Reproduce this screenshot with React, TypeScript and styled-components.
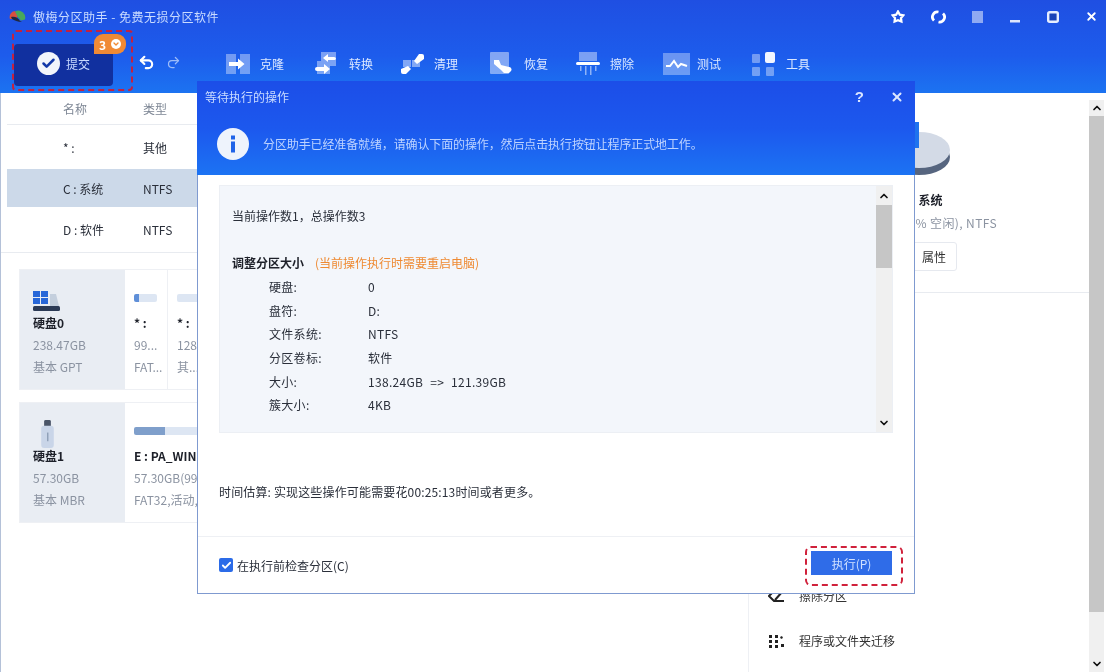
import styled, { createGlobalStyle } from "styled-components";
import { Check, ChevronDown, ChevronUp, Redo2, Undo2, X } from "lucide-react";

const GlobalStyle = createGlobalStyle`
  html, body {
    margin: 0;
    padding: 0;
    background: #fff;
  }
  * {
    box-sizing: border-box;
  }
`;

const tools = [
  { label: "克隆", pitch: 89, icon: <CloneIcon /> },
  { label: "转换", pitch: 85, icon: <ConvertIcon /> },
  { label: "清理", pitch: 90, icon: <CleanIcon /> },
  { label: "恢复", pitch: 86, icon: <RecoverIcon /> },
  { label: "擦除", pitch: 87, icon: <WipeIcon /> },
  { label: "测试", pitch: 89, icon: <TestIcon /> },
  { label: "工具", pitch: 70, icon: <ToolsIcon /> },
];

const partitions = [
  { name: "* :", type: "其他", selected: false },
  { name: "C : 系统", type: "NTFS", selected: true },
  { name: "D : 软件", type: "NTFS", selected: false },
];

const details = [
  ["硬盘:", "0"],
  ["盘符:", "D:"],
  ["文件系统:", "NTFS"],
  ["分区卷标:", "软件"],
  ["大小:", "138.24GB => 121.39GB"],
  ["簇大小:", "4KB"],
];

function CloneIcon() {
  return (
    <svg width="24" height="20" viewBox="0 0 24 20">
      <rect x="0" y="0" width="10" height="20" fill="#fff" opacity=".38" />
      <rect x="14" y="0" width="10" height="20" fill="#fff" opacity=".38" />
      <path d="M3 8h9V4.500l6.500 5.500-6.500 5.500V12H3z" fill="#fff" />
    </svg>
  );
}

function ConvertIcon() {
  return (
    <svg width="23" height="24" viewBox="0 0 23 24">
      <path d="M6 0h15v14h-6v8H2V9h4z" fill="#fff" opacity=".42" />
      <path d="M21 7a2 2 0 0 0-2-2h-6V2L8 6l5 4V8h6a2 2 0 0 0 2-1z" fill="#fff" />
      <path d="M0 17a2 2 0 0 1 2-2h7v-3l6 5-6 5v-3H2a2 2 0 0 1-2-2z" fill="#fff" />
    </svg>
  );
}

function CleanIcon() {
  return (
    <svg width="25" height="22" viewBox="0 0 25 22">
      <path d="M3 7h8v7H3zM12 7h8v7h-8z" fill="#fff" opacity=".45" />
      <path d="M1 16l7-3 3 3-5 5H3a2 2 0 0 1-2-2z" fill="#fff" />
      <path d="M14 8l5-7h3a2 2 0 0 1 2 2v3l-7 5z" fill="#fff" />
    </svg>
  );
}

function RecoverIcon() {
  return (
    <svg width="23" height="24" viewBox="0 0 23 24">
      <rect x="0" y="0" width="19" height="22" rx="1" fill="#fff" opacity=".45" />
      <path d="M4 8h5l2 5 8 2a2.500 2.500 0 0 1 2 4l-2 2h-5l-3-3-7-6z" fill="#fff" />
    </svg>
  );
}

function WipeIcon() {
  return (
    <svg width="24" height="24" viewBox="0 0 24 24">
      <rect x="3" y="0" width="18" height="9" fill="#fff" opacity=".42" />
      <rect x="0" y="10" width="24" height="3" rx="1.500" fill="#fff" />
      <path d="M4 14h1.500v5H4zM9 14h1.500v9H9zM14 14h1.500v9H14zM19 14h1.500v5H19z" fill="#fff" opacity=".5" />
    </svg>
  );
}

function TestIcon() {
  return (
    <svg width="27" height="24" viewBox="0 0 27 24">
      <rect width="27" height="22" y="1" fill="#fff" opacity=".35" />
      <path d="M3 14h4l4-5 4 6 3-3 6 2" fill="none" stroke="#fff" strokeWidth="2" />
    </svg>
  );
}

function ToolsIcon() {
  return (
    <svg width="23" height="24" viewBox="0 0 23 24">
      <rect x="0" y="2" width="8" height="9" rx="1" fill="#fff" opacity=".38" />
      <rect x="13" y="0" width="10" height="11" rx="2" fill="#f2f6ff" />
      <rect x="0" y="15" width="8" height="9" rx="1" fill="#fff" opacity=".38" />
      <rect x="14" y="15" width="8" height="9" rx="1" fill="#fff" opacity=".38" />
    </svg>
  );
}

function AppLogo() {
  return (
    <svg width="17" height="15" viewBox="0 0 17 15">
      <path d="M1 10a6 6 0 0 1 5-8l3 5-2 3z" fill="#d8503f" />
      <path d="M6 2.500a7 7 0 0 1 10 8l-4 1-3-3z" fill="#49a85a" />
      <path d="M2 8c3-1 7 0 9 4l2 1c-4 0-8-2-10-3z" fill="#20283f" />
    </svg>
  );
}

function WindowIcons() {
  return (
    <WindowControls>
      <svg width="14" height="14" viewBox="0 0 14 14">
        <path d="M7 1.500l1.800 3.200 3.500.6-2.300 2.700.4 3.500L7 10.200 3.600 11.500 4 8 1.700 5.300l3.500-.6z" fill="none" stroke="#fff" strokeWidth="2.300" />
      </svg>
      <svg width="15" height="14" viewBox="0 0 14 14">
        <path d="M2.500 10.500A5 5 0 0 1 7 2M11.500 3.500A5 5 0 0 1 7 12" fill="none" stroke="#fff" strokeWidth="2.800" />
      </svg>
      <svg width="11" height="14" viewBox="0 0 11 14">
        <rect y="1" width="11" height="12" fill="#fff" opacity=".5" />
      </svg>
      <svg width="12" height="14" viewBox="0 0 12 14">
        <rect x="1" y="10" width="10" height="2.500" fill="#fff" opacity=".85" />
      </svg>
      <svg width="12" height="14" viewBox="0 0 12 14">
        <rect x="1.200" y="2.200" width="9.600" height="9.600" rx="1.500" fill="#1a44b8" stroke="#e6eeff" strokeWidth="2.400" />
      </svg>
      <X size={13} color="#fff" strokeWidth={3.4} />
    </WindowControls>
  );
}

export default function App() {
  return (
    <>
      <GlobalStyle />
      <Page>
        <Header>
          <TitleBar>
            <AppLogo />
            <AppTitle>傲梅分区助手 - 免费无损分区软件</AppTitle>
            <WindowIcons />
          </TitleBar>
          <ToolRow>
            <SubmitRing>
              <SubmitButton>
                <SubmitCheck>
                  <Check size={15} color="#1238a8" strokeWidth={4} />
                </SubmitCheck>
                提交
              </SubmitButton>
              <Badge>
                3
                <BadgeArrow>
                  <ChevronDown size={8} color="#f08a35" strokeWidth={4} />
                </BadgeArrow>
              </Badge>
            </SubmitRing>
            <HistoryGroup>
              <Undo2 size={17} color="#fff" strokeWidth={3} />
              <Redo2 size={15} color="#9dbcf8" strokeWidth={2} />
            </HistoryGroup>
            <Tools>
              {tools.map((tool) => (
                <ToolItem key={tool.label} $pitch={tool.pitch}>
                  <ToolGlyph>{tool.icon}</ToolGlyph>
                  {tool.label}
                </ToolItem>
              ))}
            </Tools>
          </ToolRow>
        </Header>

        <Main>
          <LeftPane>
            <TableHead>
              <NameCell>名称</NameCell>
              <span>类型</span>
            </TableHead>
            <TableBody>
              {partitions.map((row) => (
                <TableRow key={row.name} $selected={row.selected}>
                  <NameCell>{row.name}</NameCell>
                  <span>{row.type}</span>
                </TableRow>
              ))}
            </TableBody>
            <DiskList>
              <DiskCard>
                <DiskSide>
                  <DiskGlyph>
                    <svg width="28" height="22" viewBox="0 0 28 22">
                      <path d="M0 1h7v6H0zM8 1h7v6H8zM0 8h7v6H0zM8 8h7v6H8z" fill="#2767d8" />
                      <path d="M17 4h6l3 12H17z" fill="#c4cfdd" />
                      <rect x="0" y="16" width="27" height="5" rx="1.500" fill="#2b3a55" />
                    </svg>
                  </DiskGlyph>
                  <DiskName>硬盘0</DiskName>
                  <DiskMeta>238.47GB</DiskMeta>
                  <DiskMeta>基本 GPT</DiskMeta>
                </DiskSide>
                <PartCell $width={43}>
                  <UsageBar $width={23} $used={5} />
                  <PartName>* :</PartName>
                  <DiskMeta>99...</DiskMeta>
                  <DiskMeta>FAT...</DiskMeta>
                </PartCell>
                <PartCell $width={60}>
                  <UsageBar $width={40} $used={0} />
                  <PartName>* :</PartName>
                  <DiskMeta>128...</DiskMeta>
                  <DiskMeta>其...</DiskMeta>
                </PartCell>
              </DiskCard>
              <DiskCard>
                <DiskSide>
                  <DiskGlyph $indent={8}>
                    <svg width="13" height="28" viewBox="0 0 13 29">
                      <rect x="3" y="0" width="7" height="7" rx="1.500" fill="#4a5568" />
                      <rect x="0" y="6" width="13" height="23" rx="3" fill="#c9d5e8" />
                      <rect x="6" y="13" width="1.500" height="9" fill="#8fa0b8" />
                    </svg>
                  </DiskGlyph>
                  <DiskName>硬盘1</DiskName>
                  <DiskMeta>57.30GB</DiskMeta>
                  <DiskMeta>基本 MBR</DiskMeta>
                </DiskSide>
                <PartCell $width={200}>
                  <UsageBar $width={150} $used={31} $tone="#7f9fcb" />
                  <PartName>E : PA_WINPE</PartName>
                  <DiskMeta>57.30GB(99% 空闲)</DiskMeta>
                  <DiskMeta>FAT32,活动,主分区</DiskMeta>
                </PartCell>
              </DiskCard>
            </DiskList>
          </LeftPane>

          <RightPane>
            <Summary>
              <PieWrap>
                <svg width="72" height="62" viewBox="0 0 72 62">
                  <ellipse cx="36" cy="35" rx="31" ry="18" fill="#56657f" />
                  <ellipse cx="36" cy="28" rx="31" ry="18" fill="#d3dae6" />
                  <path d="M30 0h6v26h-6z" fill="#1f73ee" />
                </svg>
              </PieWrap>
              <SummaryName>C : 系统</SummaryName>
              <SummaryMeta>118.05GB(40% 空闲), NTFS</SummaryMeta>
              <SummaryActions>
                <PlainButton>操作</PlainButton>
                <PlainButton>属性</PlainButton>
              </SummaryActions>
            </Summary>
            <ActionList>
              <ActionRow>
                <ActionGlyph>
                  <svg width="18" height="14" viewBox="0 0 18 14">
                    <path d="M16 1L7 1 1 7l5 5h10M14 3l-7 8" fill="none" stroke="#222" strokeWidth="2" />
                  </svg>
                </ActionGlyph>
                擦除分区
              </ActionRow>
              <ActionRow>
                <ActionGlyph>
                  <svg width="16" height="14" viewBox="0 0 16 14">
                    <path d="M1 1h3v3H1zM7 1h3v3H7zM1 6h3v3H1zM7 6h3v3H7zM1 11h3v3H1zM7 11h3v3H7zM13 10h3v3h-3zM13 2l2 1-1 2-2-1z" fill="#222" />
                  </svg>
                </ActionGlyph>
                程序或文件夹迁移
              </ActionRow>
            </ActionList>
          </RightPane>

          <ScrollColumn>
            <ScrollArrow>
              <ChevronUp size={12} color="#111" strokeWidth={3.4} />
            </ScrollArrow>
            <ScrollThumb $height={496} />
            <ScrollRest />
            <ScrollArrow>
              <ChevronDown size={12} color="#111" strokeWidth={3.4} />
            </ScrollArrow>
          </ScrollColumn>
        </Main>

        <Dialog>
          <DialogHead>
            <DialogTitleRow>
              <DialogTitle>等待执行的操作</DialogTitle>
              <DialogHelp>?</DialogHelp>
              <X size={14} color="#dbe6ff" strokeWidth={3.4} />
            </DialogTitleRow>
            <DialogNotice>
              <InfoDot>
                <svg width="32" height="32" viewBox="0 0 32 32">
                  <circle cx="16" cy="16" r="16" fill="#eef3fc" />
                  <rect x="14" y="13.500" width="4" height="11" fill="#1f63e8" />
                  <rect x="14" y="7.500" width="4" height="4" fill="#1f63e8" />
                </svg>
              </InfoDot>
              分区助手已经准备就绪，请确认下面的操作，然后点击执行按钮让程序正式地工作。
            </DialogNotice>
          </DialogHead>

          <DialogBody>
            <OperationBox>
              <OperationText>
                <OperationLine>当前操作数1，总操作数3</OperationLine>
                <OperationTitle>
                  <strong>调整分区大小</strong>
                  <RebootNote>(当前操作执行时需要重启电脑)</RebootNote>
                </OperationTitle>
                {details.map(([label, value]) => (
                  <DetailRow key={label}>
                    <span>{label}</span>
                    <span>{value}</span>
                  </DetailRow>
                ))}
              </OperationText>
              <BoxScroll>
                <ScrollArrow $height={19}>
                  <ChevronUp size={12} color="#111" strokeWidth={3.4} />
                </ScrollArrow>
                <ScrollThumb $height={63} />
                <ScrollRest />
                <ScrollArrow $height={18}>
                  <ChevronDown size={12} color="#111" strokeWidth={3.4} />
                </ScrollArrow>
              </BoxScroll>
            </OperationBox>
            <Estimate>时间估算: 实现这些操作可能需要花00:25:13时间或者更多。</Estimate>
          </DialogBody>

          <DialogFooter>
            <CheckLabel>
              <CheckBox>
                <Check size={11} color="#fff" strokeWidth={4} />
              </CheckBox>
              在执行前检查分区(C)
            </CheckLabel>
            <RunRing>
              <RunButton>执行(P)</RunButton>
            </RunRing>
          </DialogFooter>
        </Dialog>
      </Page>
    </>
  );
}

const Page = styled.div`
  position: relative;
  width: 1106px;
  height: 672px;
  display: flex;
  flex-direction: column;
  overflow: hidden;
  background: #fff;
  font-family: "Noto Sans CJK SC", "Liberation Sans", sans-serif;
  font-size: 12px;
  color: #2a2f3a;
  filter: blur(0.5px);
`;

const Header = styled.header`
  height: 93px;
  flex: none;
  background: linear-gradient(180deg, #1f4fe2 0%, #1d5cec 60%, #1c73f1 100%);
  color: #dce8ff;
`;

const TitleBar = styled.div`
  height: 30px;
  padding: 3px 8px 0 9px;
  display: flex;
  align-items: center;
  gap: 7px;
`;

const AppTitle = styled.span`
  font-size: 12px;
  letter-spacing: 0.5px;
  color: #c9dbff;
`;

const WindowControls = styled.div`
  margin-left: auto;
  width: 207px;
  display: flex;
  align-items: center;
  justify-content: space-between;
`;

const ToolRow = styled.div`
  height: 63px;
  padding-left: 12px;
  display: flex;
  align-items: flex-start;
`;

const SubmitRing = styled.div`
  position: relative;
  width: 121px;
  height: 61px;
  padding: 12px 0 0 0;
  border: 2.5px dashed #c5213f;
  border-radius: 4px;
`;

const SubmitButton = styled.button`
  width: 99px;
  height: 42px;
  padding: 0 0 4px;
  display: flex;
  align-items: center;
  justify-content: center;
  gap: 6px;
  border: 0;
  border-radius: 4px;
  background: #11309f;
  color: #c9dbff;
  font: inherit;
`;

const SubmitCheck = styled.span`
  width: 23px;
  height: 23px;
  border-radius: 50%;
  background: #f2f5fb;
  display: flex;
  align-items: center;
  justify-content: center;
`;

const Badge = styled.span`
  position: absolute;
  top: 2px;
  left: 80px;
  width: 32px;
  height: 20px;
  display: flex;
  align-items: center;
  justify-content: center;
  gap: 5px;
  border-radius: 9px 9px 9px 0;
  background: #f08a35;
  color: #fff;
  font-weight: 700;
`;

const BadgeArrow = styled.span`
  width: 10px;
  height: 10px;
  border-radius: 50%;
  background: #fff;
  display: flex;
  align-items: center;
  justify-content: center;
`;

const HistoryGroup = styled.div`
  width: 93px;
  padding: 24px 0 0 5px;
  display: flex;
  align-items: center;
  gap: 11px;
`;

const Tools = styled.nav`
  display: flex;
  padding-top: 15px;
`;

const ToolItem = styled.div<{ $pitch: number }>`
  width: ${(p) => p.$pitch}px;
  height: 37px;
  display: flex;
  align-items: center;
  font-size: 12px;
  color: #dce8ff;
`;

const ToolGlyph = styled.span`
  width: 34px;
  display: flex;
  align-items: center;
`;

const Main = styled.main`
  flex: 1;
  min-height: 0;
  display: flex;
  border-left: 1px solid #b4c1d8;
`;

const LeftPane = styled.section`
  width: 748px;
  flex: none;
  border-right: 1px solid #eef0f4;
`;

const TableHead = styled.div`
  height: 32px;
  margin-left: 6px;
  display: grid;
  grid-template-columns: 136px 1fr;
  align-items: center;
  border-bottom: 1px solid #e8ebf0;
  color: #7d8694;
`;

const NameCell = styled.span`
  padding-left: 56px;
`;

const TableBody = styled.div`
  height: 128px;
  padding-top: 3px;
  border-bottom: 1px solid #e8ebf0;
`;

const TableRow = styled.div<{ $selected: boolean }>`
  height: 38px;
  margin: 0 0 3px 6px;
  display: grid;
  grid-template-columns: 136px 1fr;
  align-items: center;
  background: ${(p) => (p.$selected ? "#ccd9e9" : "transparent")};
`;

const DiskList = styled.div`
  padding: 16px 0 0 18px;
  display: flex;
  flex-direction: column;
  gap: 12px;
`;

const DiskCard = styled.article`
  height: 121px;
  display: flex;
  border: 1px solid #eef0f4;
`;

const DiskSide = styled.div`
  width: 105px;
  flex: none;
  padding: 19px 0 0 13px;
  background: #e9edf3;
`;

const DiskGlyph = styled.div<{ $indent?: number }>`
  height: 23px;
  padding-left: ${(p) => p.$indent ?? 0}px;
  display: flex;
  align-items: center;
`;

const DiskName = styled.div`
  height: 22px;
  line-height: 22px;
  font-weight: 700;
  color: #1d2029;
`;

const DiskMeta = styled.div`
  height: 22px;
  line-height: 22px;
  white-space: nowrap;
  color: #8b93a1;
`;

const PartCell = styled.div<{ $width: number }>`
  width: ${(p) => p.$width}px;
  flex: none;
  padding: 24px 0 0 9px;
  border-right: 1px solid #eef0f4;
  overflow: hidden;
`;

const PartName = styled(DiskName)`
  white-space: nowrap;
`;

const UsageBar = styled.div<{ $width: number; $used: number; $tone?: string }>`
  width: ${(p) => p.$width}px;
  height: 8px;
  margin-bottom: 10px;
  border-radius: 2px;
  background: linear-gradient(
    90deg,
    ${(p) => p.$tone ?? "#5f8fd8"} ${(p) => p.$used}px,
    #dde6f3 ${(p) => p.$used}px
  );
`;

const RightPane = styled.section`
  flex: 1;
  min-width: 0;
  display: flex;
  flex-direction: column;
`;

const Summary = styled.div`
  height: 200px;
  padding-top: 23px;
  display: flex;
  flex-direction: column;
  align-items: center;
  border-bottom: 1px solid #e8ebf0;
`;

const PieWrap = styled.div`
  height: 70px;
  padding-top: 6px;
`;

const SummaryName = styled.div`
  margin-top: 4px;
  padding-left: 6px;
  height: 20px;
  line-height: 20px;
  font-weight: 700;
  color: #1d2029;
`;

const SummaryMeta = styled.div`
  margin-top: 3px;
  height: 20px;
  line-height: 20px;
  letter-spacing: 0.4px;
  color: #8b93a1;
  white-space: nowrap;
`;

const SummaryActions = styled.div`
  margin-top: 9px;
  padding-right: 16px;
  display: flex;
`;

const PlainButton = styled.button`
  width: 46px;
  height: 29px;
  border: 1px solid #e6e9ef;
  border-radius: 3px;
  background: #fff;
  color: #333;
  font: inherit;
`;

const ActionList = styled.div`
  margin-top: auto;
  padding: 0 0 21px 19px;
  display: flex;
  flex-direction: column;
  gap: 24px;
`;

const ActionRow = styled.div`
  height: 21px;
  display: flex;
  align-items: center;
  color: #333;
`;

const ActionGlyph = styled.span`
  width: 31px;
  display: flex;
  align-items: center;
`;

const ScrollColumn = styled.aside`
  width: 15px;
  margin: 7px 2px 0 0;
  display: flex;
  flex-direction: column;
  flex: none;
  background: #f0f0f0;
`;

const ScrollArrow = styled.div<{ $height?: number }>`
  height: ${(p) => p.$height ?? 16}px;
  flex: none;
  display: flex;
  align-items: center;
  justify-content: center;
`;

const ScrollThumb = styled.div<{ $height: number }>`
  height: ${(p) => p.$height}px;
  flex: none;
  background: #c6c6c6;
`;

const ScrollRest = styled.div`
  flex: 1;
`;

const Dialog = styled.section`
  position: absolute;
  top: 81px;
  left: 197px;
  width: 718px;
  height: 513px;
  display: flex;
  flex-direction: column;
  background: #fff;
  border: 1px solid #7f9ad0;
  border-top: 0;
`;

const DialogHead = styled.div`
  height: 94px;
  flex: none;
  margin: 0 -1px;
  padding: 0 11px 0 8px;
  background: linear-gradient(180deg, #1c4ee8 0%, #1c58ee 50%, #1c73f3 100%);
`;

const DialogTitleRow = styled.div`
  height: 31px;
  display: flex;
  align-items: center;
`;

const DialogTitle = styled.span`
  color: #c9dbff;
`;

const DialogHelp = styled.span`
  margin-left: auto;
  margin-right: 26px;
  color: #dbe6ff;
  font-family: "Liberation Sans", sans-serif;
  font-size: 15px;
  font-weight: 700;
`;

const DialogNotice = styled.div`
  height: 63px;
  padding-left: 12px;
  display: flex;
  align-items: center;
  gap: 14px;
  letter-spacing: -0.12px;
  color: #bdd3ff;
`;

const InfoDot = styled.span`
  display: flex;
`;

const DialogBody = styled.div`
  flex: 1;
  padding: 10px 21px 0;
`;

const OperationBox = styled.div`
  height: 248px;
  display: flex;
  border: 1px solid #eceff4;
  background: #f3f6fb;
`;

const OperationText = styled.div`
  flex: 1;
  padding: 19px 0 0 12px;
`;

const OperationLine = styled.div`
  height: 22px;
  line-height: 22px;
  margin-bottom: 25px;
`;

const OperationTitle = styled.div`
  height: 22px;
  margin-bottom: 1px;
  line-height: 22px;
  color: #1d2029;
`;

const RebootNote = styled.span`
  margin-left: 11px;
  color: #ee8a33;
`;

const DetailRow = styled.div`
  height: 23.6px;
  padding-left: 37px;
  display: grid;
  grid-template-columns: 99px 1fr;
  align-items: center;
  letter-spacing: 0.3px;
  word-spacing: 4px;
`;

const BoxScroll = styled.div`
  width: 16px;
  display: flex;
  flex-direction: column;
  background: #f0f0f0;
`;

const Estimate = styled.p`
  margin: 48px 0 0;
  line-height: 22px;
  letter-spacing: 0.15px;
`;

const DialogFooter = styled.footer`
  height: 57px;
  flex: none;
  padding: 0 11px 0 21px;
  display: flex;
  align-items: center;
  justify-content: space-between;
  border-top: 1px solid #eef0f4;
`;

const CheckLabel = styled.label`
  display: flex;
  align-items: center;
  gap: 4px;
`;

const CheckBox = styled.span`
  width: 14px;
  height: 14px;
  border-radius: 2px;
  background: #2b6be8;
  display: flex;
  align-items: center;
  justify-content: center;
`;

const RunRing = styled.div`
  width: 98px;
  height: 40px;
  margin-top: 2px;
  padding: 3px 9px 9px 4px;
  border: 2.5px dashed #d0213b;
  border-radius: 6px;
`;

const RunButton = styled.button`
  width: 81px;
  height: 24px;
  border: 0;
  background: #2f6ce8;
  color: #cfe0ff;
  font: inherit;
`;
